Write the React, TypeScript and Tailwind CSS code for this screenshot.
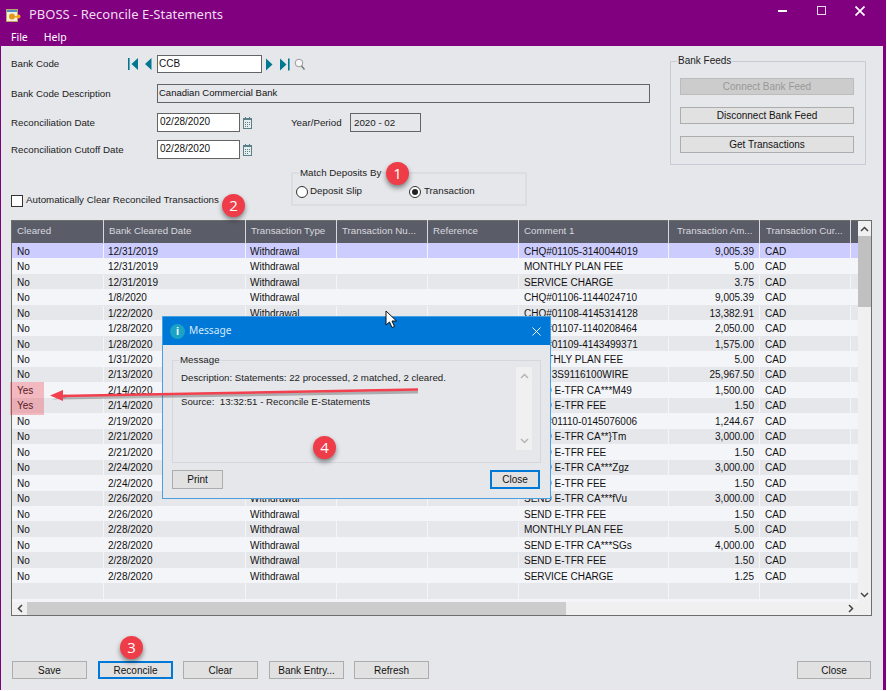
import { X } from "lucide-react";

const font = "font-['Liberation_Sans',Arial,sans-serif]";

const btn =
  "h-[18px] border border-[#adadad] bg-[#e1e1e1] text-[10px] text-[#111] flex items-center justify-center";
const btnFocus =
  "h-[18px] border-2 border-[#0078d7] bg-[#e1e1e1] text-[10px] text-[#111] flex items-center justify-center";
const inputBox =
  "h-[19px] border border-[#646464] bg-white pl-[2px] text-[10px] leading-[15px] text-[#111]";

const dates = [
  "12/31/2019", "12/31/2019", "12/31/2019", "1/8/2020", "1/22/2020", "1/28/2020", "1/28/2020", "1/31/2020",
  "2/13/2020", "2/14/2020", "2/14/2020", "2/19/2020", "2/21/2020", "2/21/2020", "2/24/2020", "2/24/2020",
  "2/26/2020", "2/26/2020", "2/28/2020", "2/28/2020", "2/28/2020", "2/28/2020",
];

const comments: [string, string][] = [
  ["CHQ#01105-3140044019", "9,005.39"],
  ["MONTHLY PLAN FEE", "5.00"],
  ["SERVICE CHARGE", "3.75"],
  ["CHQ#01106-1144024710", "9,005.39"],
  ["CHQ#01108-4145314128", "13,382.91"],
  ["CHQ#01107-1140208464", "2,050.00"],
  ["CHQ#01109-4143499371", "1,575.00"],
  ["MONTHLY PLAN FEE", "5.00"],
  ["MISC 3S9116100WIRE", "25,967.50"],
  ["SEND E-TFR CA***M49", "1,500.00"],
  ["SEND E-TFR FEE", "1.50"],
  ["CHQ#01110-0145076006", "1,244.67"],
  ["SEND E-TFR CA**}Tm", "3,000.00"],
  ["SEND E-TFR FEE", "1.50"],
  ["SEND E-TFR CA***Zgz", "3,000.00"],
  ["SEND E-TFR FEE", "1.50"],
  ["SEND E-TFR CA***fVu", "3,000.00"],
  ["SEND E-TFR FEE", "1.50"],
  ["MONTHLY PLAN FEE", "5.00"],
  ["SEND E-TFR CA***SGs", "4,000.00"],
  ["SEND E-TFR FEE", "1.50"],
  ["SERVICE CHARGE", "1.25"],
];

const headers = [
  { label: "Cleared", cls: "w-[92px] pl-[5px]" },
  { label: "Bank Cleared Date", cls: "w-[142px] pl-[5px]" },
  { label: "Transaction Type", cls: "w-[91px] pl-[5px]" },
  { label: "Transaction Nu...", cls: "w-[91px] pl-[5px]" },
  { label: "Reference", cls: "w-[91px] pl-[5px]" },
  { label: "Comment 1", cls: "w-[150px] pl-[5px]" },
  { label: "Transaction Am...", cls: "w-[91px] pl-[8px]" },
  { label: "Transaction Cur...", cls: "w-[91px] pl-[6px]" },
];

function Badge({ n, className }: { n: number; className: string }) {
  return (
    <div
      className={`absolute h-[23px] w-[23px] rounded-full bg-[#ee3d48] text-white flex items-center justify-center text-[15px] font-['Open_Sans',sans-serif] shadow-[0_3px_5px_rgba(0,0,0,0.45)] ${className}`}
    >
      {n}
    </div>
  );
}

function Cal() {
  return (
    <svg width="9" height="12" viewBox="0 0 9 12" className="ml-[3px]">
      <rect x="0.5" y="1.5" width="8" height="10" fill="#e6eef0" stroke="#5d8088" />
      <rect x="0" y="1" width="9" height="2" fill="#5d8088" />
      <path d="M2.5 0v2M6.5 0v2" stroke="#5d8088" />
      <path d="M2 5.5h1M4 5.5h1M6 5.5h1M2 7.5h1M4 7.5h1M6 7.5h1M2 9.5h1M4 9.5h1" stroke="#5d8088" />
    </svg>
  );
}

function Row({ i }: { i: number }) {
  const bg = i === 0 ? "bg-[#ccccff]" : i % 2 === 1 ? "bg-[#f4f5f9]" : "bg-[#e6e7eb]";
  const sep = "border-r border-[#f4f5f9]";
  return (
    <div className={`flex h-[15.48px] items-center pt-px text-[10px] text-[#111] ${bg}`}>
      <div className={`w-[92px] pl-[5px] ${sep}`}>{i === 9 || i === 10 ? "Yes" : "No"}</div>
      <div className={`w-[142px] pl-[4px] ${sep}`}>{dates[i]}</div>
      <div className={`w-[91px] pl-[4px] ${sep}`}>Withdrawal</div>
      <div className={`w-[91px] h-full ${sep}`} />
      <div className={`w-[91px] h-full ${sep}`} />
      <div className={`w-[150px] pl-[5px] ${sep}`}>{comments[i][0]}</div>
      <div className={`w-[91px] pr-[5px] text-right ${sep}`}>{comments[i][1]}</div>
      <div className={`w-[91px] pl-[5px] ${sep}`}>CAD</div>
    </div>
  );
}

export default function App() {
  return (
    <div className={`relative h-[691px] w-[887px] overflow-hidden bg-white ${font}`}>
      <div className="flex h-[690px] w-[886px] flex-col bg-[#800080]">
        {/* title bar */}
        <div className="flex h-[30px] items-center pl-[6px] text-white">
          <svg width="15" height="15" viewBox="0 0 15 15">
            <rect x="0.5" y="1.5" width="11" height="12" fill="#f6f1dc" stroke="#b9a66a" />
            <rect x="1" y="2" width="10" height="2" fill="#4e8fd0" />
            <circle cx="6" cy="8.5" r="3" fill="#e09a1c" />
            <circle cx="12.5" cy="8.5" r="2" fill="#f0a818" />
            <rect x="9" y="8" width="3" height="1.5" fill="#f0a818" />
          </svg>
          <div className="ml-[8px] text-[13px] text-[#f0dcf0] font-['Noto_Sans',sans-serif]">PBOSS - Reconcile E-Statements</div>
          <div className="-mt-[9px] ml-auto flex items-center pr-[21px]">
            <div className="h-[2px] w-[9px] bg-white" />
            <div className="ml-[30px] h-[9px] w-[9px] border-[1.5px] border-[#e8d8e8]" />
            <svg width="10" height="10" viewBox="0 0 10 10" className="ml-[29px]">
              <path d="M0.5 0.5l9 9M9.5 0.5l-9 9" stroke="#fff" strokeWidth="1.7" />
            </svg>
          </div>
        </div>
        {/* menu */}
        <div className="flex h-[16px] items-center gap-[16px] pl-[11px] text-[10.5px] text-white font-['Noto_Sans',sans-serif]">
          <span>File</span>
          <span>Help</span>
        </div>

        <div className="ml-px mr-[3px] flex flex-1 flex-col bg-[#e6e7eb] text-[9.75px] text-[#222]">
          {/* top form */}
          <div className="flex justify-between pr-[17px]">
            <div className="pl-[10px] pt-[9px]">
              <div className="flex h-[18px] items-center">
                <div className="w-[146px] pt-[1px]">Bank Code</div>
                <div className="-ml-[29px] flex w-[29px] items-center">
                  <svg width="25" height="12" viewBox="0 0 25 12">
                    <path d="M0 0h1.6v12H0zM3.5 6L10 0v12zM17 6l6.5-6v12z" fill="#00788f" />
                  </svg>
                </div>
                <div className="h-[18px] w-[105px] border border-[#646464] bg-white pl-[1px] pt-px text-[10px] leading-[13px] text-[#111]">CCB</div>
                <svg width="40" height="13" viewBox="0 0 40 13" className="ml-[4px]">
                  <path d="M0 0.5l6.5 6-6.5 6zM14 0.5l6.5 6-6.5 6zM22 0.5h1.6v12H22z" fill="#00788f" />
                  <circle cx="33" cy="5" r="3.8" fill="#f6f6f6" stroke="#999" />
                  <path d="M35.5 8l3 3.5" stroke="#777" strokeWidth="1.4" />
                </svg>
              </div>
              <div className="mt-[11px] flex h-[19px] items-center">
                <div className="w-[146px] pt-[2px]">Bank Code Description</div>
                <div className="h-[19px] w-[493px] border border-[#646464] pl-[1px] text-[9.5px] leading-[15px] text-[#111]">Canadian Commercial Bank</div>
              </div>
              <div className="mt-[10px] flex h-[19px] items-center">
                <div className="w-[146px] pt-[2px]">Reconciliation Date</div>
                <div className={`${inputBox} w-[83px]`}>02/28/2020</div>
                <Cal />
                <div className="ml-[39px] w-[59px] pt-[2px]">Year/Period</div>
                <div className="h-[19px] w-[71px] border border-[#646464] pl-[3px] leading-[17px]">2020 - 02</div>
              </div>
              <div className="mt-[8px] flex h-[19px] items-center">
                <div className="w-[146px] pt-[2px]">Reconciliation Cutoff Date</div>
                <div className={`${inputBox} w-[83px]`}>02/28/2020</div>
                <Cal />
              </div>
            </div>
            <fieldset className="mt-[9px] h-[110px] w-[196px] border border-[#c8cad6] pl-[9px] pr-[11px] text-[10px]">
              <legend className="-ml-[3px] px-[1px] text-[10px] leading-[12px]">Bank Feeds</legend>
              <div className="mt-[11px] flex h-[17px] items-center justify-center border border-[#bcbcbc] bg-[#cccccc] text-[#999]">Connect Bank Feed</div>
              <div className="mt-[12px] flex h-[17px] items-center justify-center border border-[#adadad] bg-[#e1e1e1] text-[#111]">Disconnect Bank Feed</div>
              <div className="mt-[12px] flex h-[17px] items-center justify-center border border-[#adadad] bg-[#e1e1e1] text-[#111]">Get Transactions</div>
            </fieldset>
          </div>

          {/* checkbox + match deposits */}
          <div className="mt-[2px] flex items-end pl-[10px]">
            <div className="mb-[-2px] flex w-[280px] items-center self-end">
              <div className="h-[12px] w-[12px] border border-[#333] bg-white" />
              <span className="ml-[3px]">Automatically Clear Reconciled Transactions</span>
            </div>
            <fieldset className="flex h-[39px] w-[236px] items-center border-2 border-[#dcdde4] pl-[3px]">
              <legend className="ml-[3px] px-[1px] text-[9.75px] leading-[12px]">Match Deposits By</legend>
              <div className="flex w-[113px] items-center">
                <div className="h-[12px] w-[12px] rounded-full border border-[#333] bg-white" />
                <span className="ml-[2px]">Deposit Slip</span>
              </div>
              <div className="flex items-center">
                <div className="flex h-[12px] w-[12px] items-center justify-center rounded-full border border-[#333] bg-white">
                  <div className="h-[6px] w-[6px] rounded-full bg-[#222]" />
                </div>
                <span className="ml-[3px]">Transaction</span>
              </div>
            </fieldset>
          </div>

          {/* grid */}
          <div className="ml-[10px] mt-[14px] flex h-[396px] w-[861px] flex-col border border-[#6e6e6e] bg-[#f4f5f9]">
            <div className="flex h-[381px]">
              <div className="w-[846px]">
                <div className="flex h-[22px] items-center bg-[#5a5c68] pb-[1px] text-[9.75px] text-[#d8d9de]">
                  {headers.map((h) => (
                    <div key={h.label} className={`flex h-[24px] items-center border-r border-[#d8d9e0] ${h.cls}`}>
                      {h.label}
                    </div>
                  ))}
                </div>
                {dates.map((_, i) => (
                  <Row key={i} i={i} />
                ))}
                <div className="flex h-[15.48px] bg-[#e6e7eb]">
                  <div className="h-full w-[92px] border-r border-[#f4f5f9]" />
                  <div className="h-full w-[142px] border-r border-[#f4f5f9]" />
                  <div className="h-full w-[91px] border-r border-[#f4f5f9]" />
                  <div className="h-full w-[91px] border-r border-[#f4f5f9]" />
                  <div className="h-full w-[91px] border-r border-[#f4f5f9]" />
                  <div className="h-full w-[150px] border-r border-[#f4f5f9]" />
                  <div className="h-full w-[91px] border-r border-[#f4f5f9]" />
                  <div className="h-full w-[91px] border-r border-[#f4f5f9]" />
                </div>
              </div>
              {/* vertical scrollbar */}
              <div className="flex w-[13px] flex-col bg-[#f0f0f0]">
                <div className="flex h-[15px] items-center justify-center">
                  <svg width="9" height="6" viewBox="0 0 9 6"><path d="M1 5l3.5-3.5L8 5" fill="none" stroke="#444" strokeWidth="1.5" /></svg>
                </div>
                <div className="h-[71px] bg-[#c0c0c0]" />
                <div className="mt-auto flex h-[15px] items-center justify-center">
                  <svg width="9" height="6" viewBox="0 0 9 6"><path d="M1 1l3.5 3.5L8 1" fill="none" stroke="#444" strokeWidth="1.5" /></svg>
                </div>
              </div>
            </div>
            {/* horizontal scrollbar */}
            <div className="flex h-[13px] items-center bg-[#f0f0f0]">
              <div className="flex h-full w-[15px] items-center justify-center">
                <svg width="6" height="9" viewBox="0 0 6 9"><path d="M5 1L1.5 4.5 5 8" fill="none" stroke="#444" strokeWidth="1.5" /></svg>
              </div>
              <div className="h-full w-[539px] bg-[#cccccc]" />
              <div className="ml-auto mr-[17px] flex h-full items-center">
                <svg width="6" height="9" viewBox="0 0 6 9"><path d="M1 1l3.5 3.5L1 8" fill="none" stroke="#444" strokeWidth="1.5" /></svg>
              </div>
            </div>
          </div>

          {/* footer */}
          <div className="mt-[45px] flex pl-[11px] pr-[12px]">
            <div className={`${btn} w-[75px]`}>Save</div>
            <div className={`${btnFocus} ml-[11px] w-[75px]`}>Reconcile</div>
            <div className={`${btn} ml-[10px] w-[75px]`}>Clear</div>
            <div className={`${btn} ml-[11px] w-[75px]`}>Bank Entry...</div>
            <div className={`${btn} ml-[10px] w-[75px]`}>Refresh</div>
            <div className={`${btn} ml-auto w-[74px]`}>Close</div>
          </div>
        </div>
      </div>

      {/* message dialog */}
      <div className="absolute left-[162px] top-[316px] flex h-[183px] w-[389px] flex-col border border-[#4a9fe0] bg-[#e6e7eb] text-[9.7px] text-[#222]">
        <div className="flex h-[28px] items-center bg-[#0078d7] pl-[7px] pr-[6px] text-white">
          <div className="flex h-[15px] w-[15px] items-center justify-center rounded-full bg-[#1aa3c4] text-[11px] font-bold leading-none">i</div>
          <span className="ml-[4px] text-[10.2px] text-[#d5e8f8] font-['Noto_Sans',sans-serif]">Message</span>
          <X size={15} strokeWidth={1.5} className="ml-auto text-white" />
        </div>
        <fieldset className="mx-[9px] mt-[9px] h-[109px] border border-[#d6d7dd] pl-[8px]">
          <legend className="-ml-[2px] px-[1px] text-[9.75px] leading-[12px]">Message</legend>
          <div className="flex">
            <div className="flex-1">
              <div className="mt-[5px]">Description: Statements: 22 processed, 2 matched, 2 cleared.</div>
              <div className="mt-[9px]">Source:&nbsp; 13:32:51 - Reconcile E-Statements</div>
            </div>
            <div className="mr-[8px] mt-[1px] flex h-[83px] w-[16px] flex-col items-center justify-between bg-[#f0f0f0] py-[6px]">
              <svg width="9" height="6" viewBox="0 0 9 6"><path d="M1 5l3.5-3.5L8 5" fill="none" stroke="#b5b5b5" strokeWidth="1.5" /></svg>
              <svg width="9" height="6" viewBox="0 0 9 6"><path d="M1 1l3.5 3.5L8 1" fill="none" stroke="#b5b5b5" strokeWidth="1.5" /></svg>
            </div>
          </div>
        </fieldset>
        <div className="ml-[9px] mr-[10px] mt-[7px] flex justify-between text-[10px]">
          <div className="flex h-[19px] w-[51px] items-center justify-center border border-[#adadad] bg-[#e1e1e1] text-[#111]">Print</div>
          <div className="flex h-[19px] w-[50px] items-center justify-center border-2 border-[#0078d7] bg-[#e1e1e1] text-[#111]">Close</div>
        </div>
      </div>

      {/* annotations */}
      <div className="absolute left-[10px] top-[382px] h-[33px] w-[34px] bg-[#f03040]/30" />
      <svg width="887" height="691" viewBox="0 0 887 691" className="absolute left-0 top-0">
        <path d="M60 398L418 392" stroke="#555" strokeOpacity="0.4" strokeWidth="3" />
        <path d="M52 400l14-6v4z" fill="#555" fillOpacity="0.3" />
        <path d="M60 396L418 389.5" stroke="#f2404e" strokeWidth="2.4" />
        <path d="M50 395.5L63 390V401z" fill="#f2404e" />
      </svg>
      <Badge n={1} className="left-[386px] top-[162px]" />
      <Badge n={2} className="left-[222px] top-[194px]" />
      <Badge n={3} className="left-[120px] top-[636px]" />
      <Badge n={4} className="left-[313px] top-[436px]" />
      <svg width="13" height="19" viewBox="0 0 13 19" className="absolute left-[385px] top-[310px]">
        <path d="M1 1v14l3.5-3 2.5 5.5 2.5-1-2.5-5.5h4.5z" fill="#fff" stroke="#111" strokeWidth="1" />
      </svg>
    </div>
  );
}
